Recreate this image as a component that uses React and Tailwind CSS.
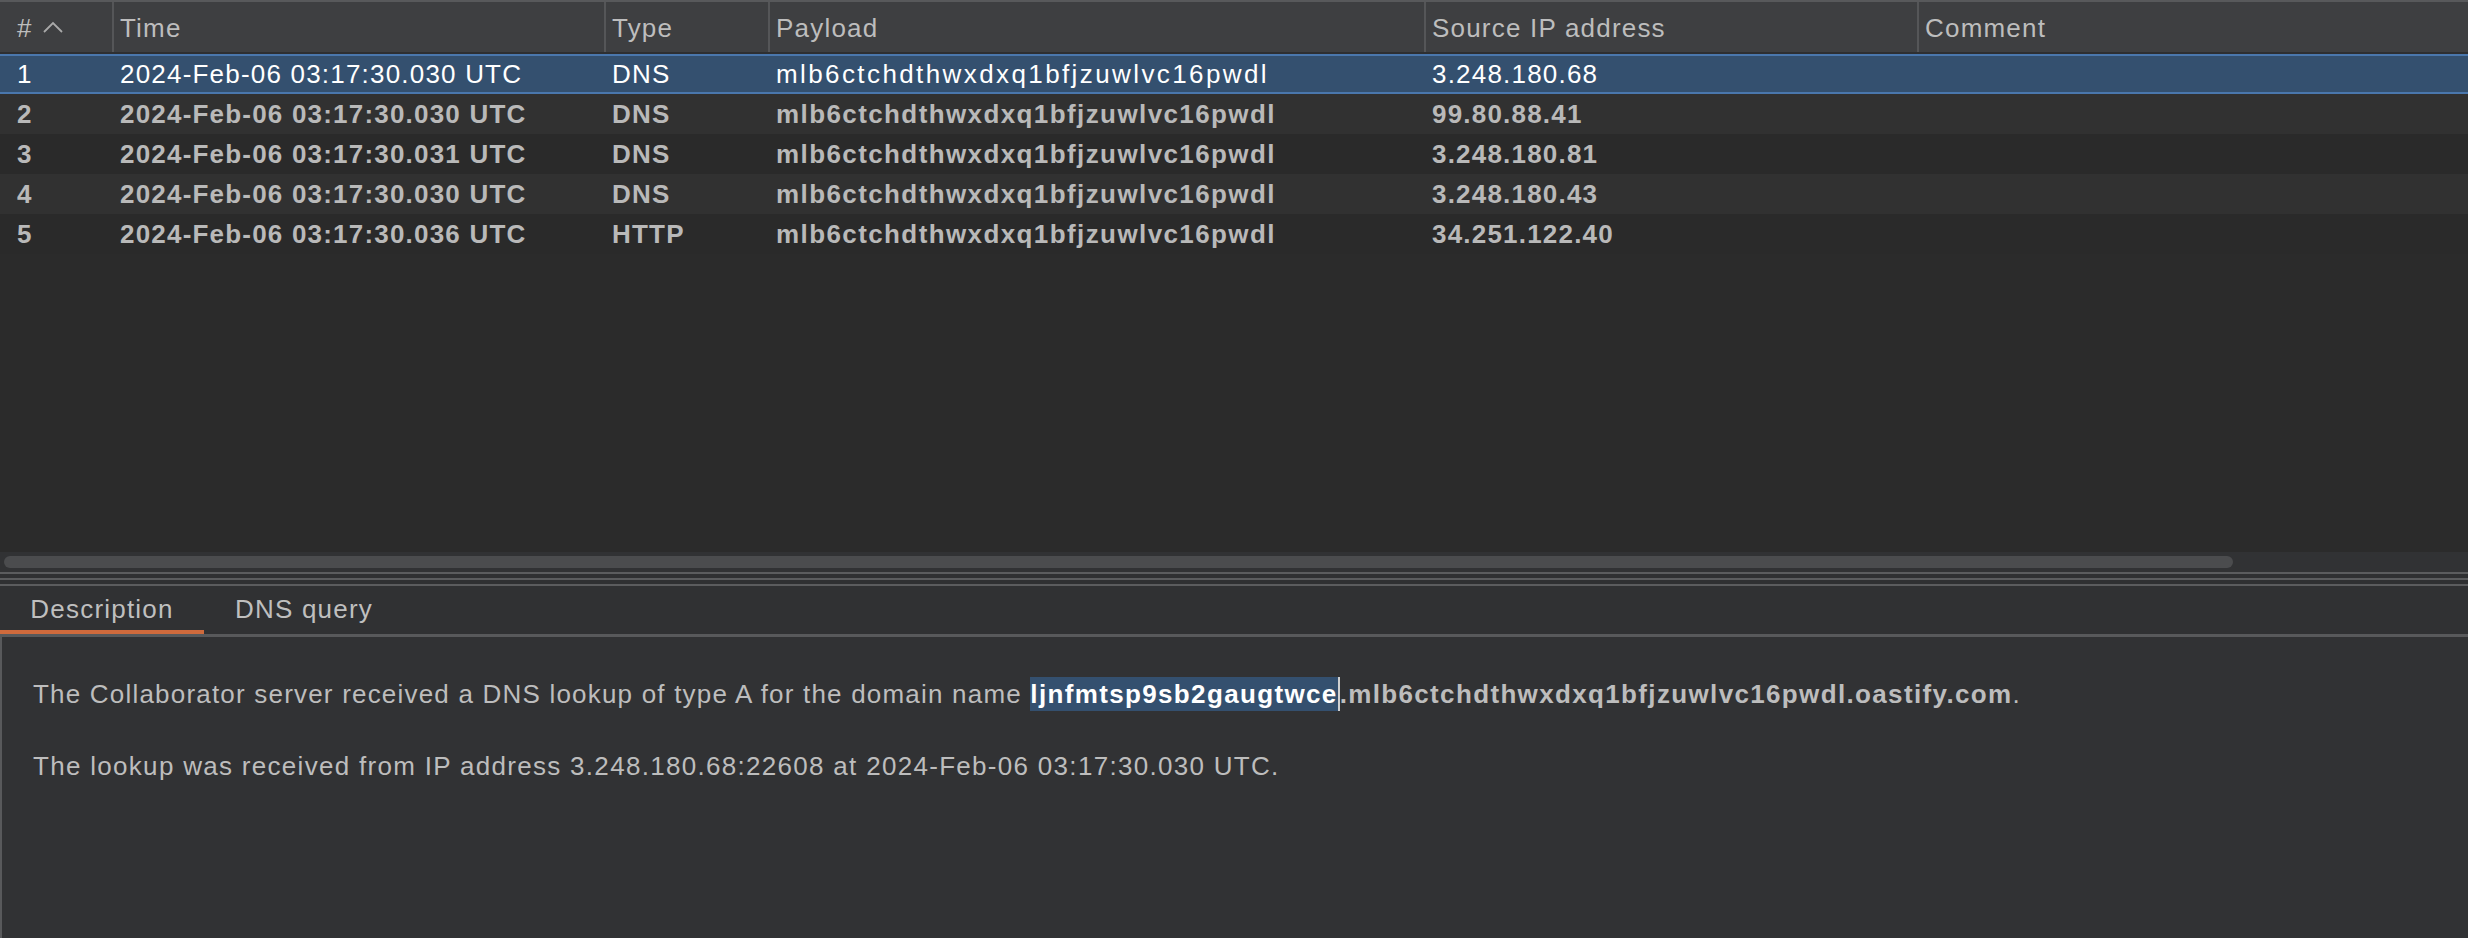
import React from "react";

const rows = [
  { n: "1", time: "2024-Feb-06 03:17:30.030 UTC", type: "DNS", ip: "3.248.180.68", selected: true },
  { n: "2", time: "2024-Feb-06 03:17:30.030 UTC", type: "DNS", ip: "99.80.88.41" },
  { n: "3", time: "2024-Feb-06 03:17:30.031 UTC", type: "DNS", ip: "3.248.180.81" },
  { n: "4", time: "2024-Feb-06 03:17:30.030 UTC", type: "DNS", ip: "3.248.180.43" },
  { n: "5", time: "2024-Feb-06 03:17:30.036 UTC", type: "HTTP", ip: "34.251.122.40" },
];

const payload = "mlb6ctchdthwxdxq1bfjzuwlvc16pwdl";

function Row({ r, idx }) {
  if (r.selected) {
    return (
      <div className="flex h-[40px] items-center border-y-2 border-[#4a77ad] bg-[#34506f] text-white font-normal">
        <div className="w-[112px] pl-[17px]">{r.n}</div>
        <div className="w-[492px] pl-[8px]">{r.time}</div>
        <div className="w-[164px] pl-[8px]">{r.type}</div>
        <div className="w-[656px] pl-[8px] tracking-[2.4px]">{payload}</div>
        <div className="w-[493px] pl-[8px]">{r.ip}</div>
        <div className="flex-1" />
      </div>
    );
  }
  const bg = idx % 2 === 1 ? "bg-[#313131]" : "bg-[#2a2a2a]";
  return (
    <div className={`flex h-[40px] items-center ${bg} text-[#b9b9b9] font-bold`}>
      <div className="w-[112px] pl-[17px]">{r.n}</div>
      <div className="w-[492px] pl-[8px]">{r.time}</div>
      <div className="w-[164px] pl-[8px]">{r.type}</div>
      <div className="w-[656px] pl-[8px] tracking-[1.4px]">{payload}</div>
      <div className="w-[493px] pl-[8px]">{r.ip}</div>
      <div className="flex-1" />
    </div>
  );
}

export default function App() {
  return (
    <div
      className="w-[2468px] h-[938px] flex flex-col bg-[#2b2b2b] overflow-hidden text-[26px] leading-none tracking-[1.2px]"
      style={{ fontFamily: '"Liberation Sans", Arial, Helvetica, sans-serif' }}
    >
      {/* Header */}
      <div className="flex h-[54px] shrink-0 border-t-2 border-b-2 border-t-[#58595b] border-b-[#2e2f31] bg-[#3e3f41] text-[#bdbdbd]">
        <div className="w-[112px] flex items-center pl-[17px] gap-[10px] pt-[2px]">
          <span>#</span>
          <svg width="20" height="12" viewBox="0 0 20 12" className="mt-[-2px]">
            <polyline points="1,11 10,2 19,11" fill="none" stroke="#a9a9a9" strokeWidth="1.8" />
          </svg>
        </div>
        <div className="w-[492px] flex items-center border-l-2 border-[#555658] pl-[6px] pt-[2px]">Time</div>
        <div className="w-[164px] flex items-center border-l-2 border-[#555658] pl-[6px] pt-[2px]">Type</div>
        <div className="w-[656px] flex items-center border-l-2 border-[#555658] pl-[6px] pt-[2px]">Payload</div>
        <div className="w-[493px] flex items-center border-l-2 border-[#555658] pl-[6px] pt-[2px]">Source IP address</div>
        <div className="flex-1 flex items-center border-l-2 border-[#555658] pl-[6px] pt-[2px]">Comment</div>
      </div>

      {/* Rows */}
      <div className="flex flex-col shrink-0">
        {rows.map((r, i) => (
          <Row key={r.n} r={r} idx={i} />
        ))}
      </div>

      <div className="flex-1 bg-[#2b2b2b]" />

      {/* Horizontal scrollbar */}
      <div className="h-[20px] shrink-0 bg-[#313234] pl-[4px] pt-[4px]">
        <div className="h-[12px] w-[2229px] rounded-full bg-[#4b4c4e]" />
      </div>

      {/* Splitter */}
      <div className="h-[14px] shrink-0 flex flex-col bg-[#2f3032]">
        <div className="h-[2px] bg-[#5b5c5e]" />
        <div className="h-[4px]" />
        <div className="h-[2px] bg-[#5b5c5e]" />
        <div className="h-[4px]" />
        <div className="h-[2px] bg-[#5b5c5e]" />
      </div>

      {/* Tabs */}
      <div className="h-[48px] shrink-0 flex bg-[#303133] text-[#bfbfbf]">
        <div className="w-[204px] flex flex-col">
          <div className="flex-1 flex items-center justify-center pt-[2px]">Description</div>
          <div className="h-[4px] bg-[#cf6a3c]" />
        </div>
        <div className="pl-[31px] flex items-center pb-[2px]">DNS query</div>
      </div>

      {/* Content */}
      <div className="h-[304px] shrink-0 border-t-[3px] border-l-2 border-[#58595b] bg-[#313234] text-[#bdbdbd] pl-[31px] pt-[41px]">
        <div className="h-[32px] flex items-center tracking-[1.35px]">
          <span className="tracking-[1.2px]">The Collaborator server received a DNS lookup of type A for the domain name&nbsp;</span>
          <span className="font-bold text-white bg-[#34506f] py-[4px] border-r-2 border-[#d0d0d0]">ljnfmtsp9sb2gaugtwce</span>
          <span className="font-bold">.{payload}.oastify.com</span>
          <span>.</span>
        </div>
        <div className="h-[32px] mt-[40px] flex items-center tracking-[1.3px]">
          The lookup was received from IP address 3.248.180.68:22608 at 2024-Feb-06 03:17:30.030 UTC.
        </div>
      </div>
    </div>
  );
}
